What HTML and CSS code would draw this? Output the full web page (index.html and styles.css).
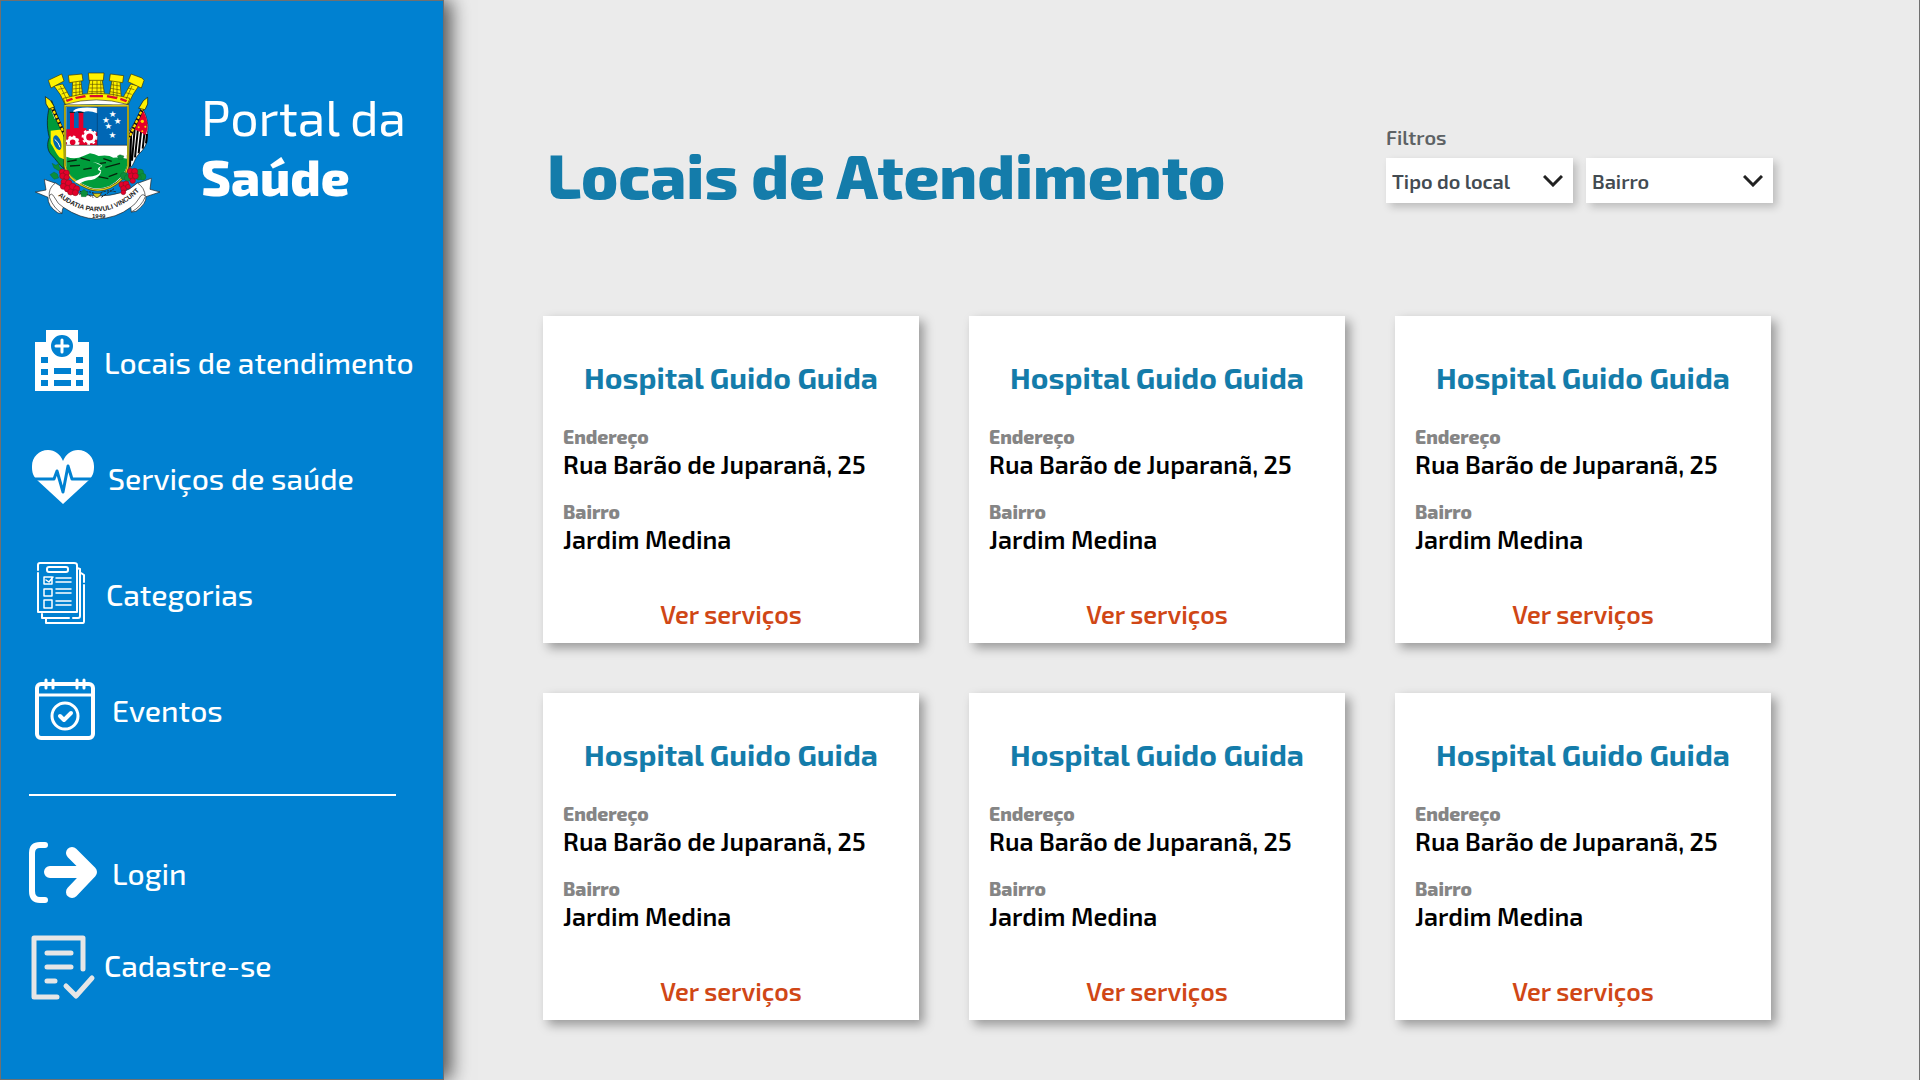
FILE: index.html
```html
<!DOCTYPE html>
<html lang="pt-BR">
<head>
<meta charset="utf-8">
<meta name="viewport" content="width=device-width, initial-scale=1">
<title>Portal da Saúde</title>
<link rel="stylesheet" href="styles.css">
</head>
<body>
<div class="page">
  <aside class="sidebar">
    <a class="brand" href="#">
      <svg class="brand-crest" viewBox="15 36 390 444" role="img" aria-label="Brasão do município">
        <!-- flags -->
        <path d="M65 122C48 160 50 205 58 232C50 252 52 270 62 282C80 300 88 316 102 326L102 220Z" fill="#009b3a" stroke="#111" stroke-width="2"/>
        <path d="M62 212L100 208L102 298L88 292C78 280 70 262 62 250Z" fill="#fff200"/>
        <ellipse cx="82" cy="248" rx="11" ry="23" fill="#0067b1" transform="rotate(-18 82 248)"/>
        <path d="M74 238Q86 246 90 262" fill="none" stroke="#fff" stroke-width="3"/>
        <path d="M62 140L76 176" stroke="#fff" stroke-width="4"/>
        <path d="M338 146C352 170 356 200 352 220C356 250 340 270 325 284C312 298 312 318 298 324L297 215Z" fill="#fff" stroke="#111" stroke-width="2"/>
        <path d="M304 210L300 320M314 207L306 302M324 206L315 292M334 208L326 280M344 214L338 266M351 222L348 250" stroke="#000" stroke-width="6"/>
        <path d="M336 148C352 170 358 200 347 226Q330 212 305 206Z" fill="#e4002b"/>
        <g fill="#ffd900"><circle cx="337" cy="184" r="5"/><circle cx="326" cy="202" r="3"/><circle cx="346" cy="200" r="3"/><circle cx="337" cy="214" r="3"/></g>
        <path d="M59 128L106 228M345 130L296 236" stroke="#111" stroke-width="10"/>
        <path d="M59 128L106 228M345 130L296 236" stroke="#ffd900" stroke-width="7" stroke-dasharray="9 5"/>
        <path d="M46 110L61 121L73 140L57 147L48 132ZM353 112L340 122L326 145L345 149L353 132Z" fill="#fff200" stroke="#111" stroke-width="2"/>
        <!-- mural crown -->
        <path d="M104 128Q198 96 294 128L286 138Q198 128 112 138Z" fill="#fff"/>
        <g fill="#fff200" stroke="#3d3500" stroke-width="2" stroke-linejoin="round">
          <path d="M72 78L98 72L122 115L104 131Q94 104 72 78Z"/>
          <path d="M128 60L152 58L158 106L126 115Z"/>
          <path d="M180 58L216 58L224 104L172 104Z"/>
          <path d="M246 60L270 64L274 116L238 106Z"/>
          <path d="M302 72L326 78Q306 104 296 131L276 118Z"/>
          <path d="M55 61L95 42L102 63L63 84Z"/><path d="M115 46L156 42L159 62L118 68Z"/>
          <path d="M175 39L222 39L220 61L177 61Z"/><path d="M241 42L281 47L278 68L238 62Z"/>
          <path d="M303 42L336 54L342 61L334 84L294 65Z"/>
          <path d="M100 115Q198 84 300 115L292 133Q198 106 106 133Z"/>
        </g>
        <path d="M85 88L104 84M95 102L112 96M91 78L111 120M129 76L155 73M129 87L156 84M129 98L157 95M138 66L138 108M149 64L149 105M180 73L218 73M178 84L220 84M176 95L222 95M188 62L186 103M201 62L201 103M212 62L213 103M244 74L270 78M242 85L271 90M240 95L272 101M250 66L250 108M261 68L261 111M294 84L313 89M287 98L305 103M306 78L288 118" fill="none" stroke="#5d5200" stroke-width="2"/>
        <path d="M107 120L126 113L129 119L111 126ZM135 111L165 105L168 112L138 117ZM179 105L219 105L219 112L179 112ZM232 105L263 111L260 118L230 112ZM272 113L292 121L288 127L270 120Z" fill="#d9112b"/>
        <!-- shield -->
        <path d="M105 137H294V318Q286 360 240 382Q198 400 160 378Q112 354 105 318Z" fill="#fff" stroke="#4d4700" stroke-width="7"/>
        <path d="M105 137H294V318Q286 360 240 382Q198 400 160 378Q112 354 105 318Z" fill="none" stroke="#d8ce1e" stroke-width="4"/>
        <path d="M109 141H291V256H109Z" fill="#0067b5"/>
        <path d="M130 152Q145 138 202 144V160Q175 150 160 157Q145 148 130 158Z" fill="#fff"/>
        <path d="M120 158H132V204H146V158H160V204H169V210L202 216V256H109V208H120Z" fill="#e4002b"/>
        <path d="M119 157H135M144 157H161" stroke="#111" stroke-width="3"/>
        <circle cx="128" cy="247" r="13" fill="none" stroke="#fff" stroke-width="9"/>
        <circle cx="128" cy="247" r="18" fill="none" stroke="#fff" stroke-width="5" stroke-dasharray="7 7"/>
        <path d="M109 256H202V268H109Z" fill="#fff"/>
        <circle cx="179" cy="231" r="15" fill="#e4002b" stroke="#fff" stroke-width="9"/>
        <circle cx="179" cy="231" r="21" fill="none" stroke="#fff" stroke-width="6" stroke-dasharray="8 8"/>
        <path d="M109 256H291" stroke="#111" stroke-width="2"/><path d="M202 141V256" stroke="#063e6c" stroke-width="2"/>
        <path d="M109 257H291V285Q250 280 205 284Q150 286 109 292Z" fill="#fff"/>
        <g fill="#fff" font-family="DejaVu Sans, sans-serif" font-size="26" text-anchor="middle"><text x="248" y="171">★</text><text x="228" y="188">★</text><text x="263" y="192">★</text><text x="235" y="208">★</text><text x="247" y="233">★</text></g>
        <path d="M109 290Q135 300 160 288L180 280Q194 282 206 288Q235 283 250 293Q272 292 291 296V318Q280 355 238 378Q198 394 163 374Q112 350 109 318Z" fill="#009c3b"/>
        <path d="M112 305L140 300M152 294L180 302M120 318L150 316M160 328L185 324M220 296L245 304M226 322L270 310M236 350L262 340M205 350L235 356M210 310L228 308" stroke="#06220c" stroke-width="4"/>
        <path d="M188 306Q210 313 214 318Q194 328 212 334Q204 350 174 350Q146 356 134 366L148 372Q164 360 184 360Q212 352 214 332Q202 326 217 318Q206 308 188 306Z" fill="#fff"/>
        <!-- motto ribbon -->
        <g fill="#fff" stroke="#222" stroke-width="2" stroke-linejoin="round">
          <path d="M43 358L80 371Q64 408 96 460L84 459Q52 438 54 412L16 396L48 390Z"/>
          <path d="M364 355L320 371Q340 408 304 456L318 454Q350 430 348 410L390 396L360 388Z"/>
          <path d="M76 369Q54 385 58 412Q72 446 96 460Q96 450 100 442Q150 476 200 477Q260 475 302 442L304 456Q334 440 346 410Q344 382 322 369Q282 408 202 408Q126 404 76 369Z"/>
        </g>
        <path d="M58 408Q64 396 72 410Q84 434 100 442M346 408Q336 398 328 414Q316 434 302 442" fill="none" stroke="#222" stroke-width="2"/>
        <path d="M148 404Q174 386 202 406Q222 386 260 396M150 394L190 412M214 412L252 386" fill="none" stroke="#222" stroke-width="3" stroke-dasharray="7 3"/>
        <path d="M188 400Q201 426 214 400Z" fill="#d8ce1e" stroke="#222" stroke-width="2"/>
        <path id="motto-line" d="M84 407Q140 456 206 454Q270 450 325 396" fill="none"/>
        <text class="crest-motto"><textPath href="#motto-line" startOffset="0">AUDATIA PARVULI VINCUNT</textPath></text>
        <text class="crest-year" x="206" y="474">1949</text>
        <!-- berries and leaves -->
        <g fill="#0b8f3c" stroke="#0b5d2a" stroke-width="1"><path d="M66 310l12 6 8-6 2 12 10 6-12 4-14-8zM60 344l12-8 10 6 4 12-14 4zM152 396l10-8 12 10-6 12-14 0zM262 288l8-4 12 4-4 10-12 0z"/><circle cx="282" cy="348" r="11"/><circle cx="293" cy="354" r="10"/><circle cx="330" cy="338" r="11"/><circle cx="338" cy="350" r="10"/><circle cx="326" cy="352" r="8"/></g>
        <g fill="#e4002b" stroke="#8f1020" stroke-width="2">
          <circle cx="97" cy="336" r="9"/><circle cx="109" cy="339" r="9"/><circle cx="98" cy="348" r="9"/><circle cx="110" cy="352" r="8"/>
          <circle cx="102" cy="366" r="9"/><circle cx="116" cy="370" r="10"/><circle cx="100" cy="379" r="9"/><circle cx="113" cy="386" r="10"/><circle cx="128" cy="380" r="10"/><circle cx="122" cy="396" r="9"/><circle cx="140" cy="386" r="9"/><circle cx="136" cy="398" r="9"/>
          <circle cx="301" cy="334" r="9"/><circle cx="314" cy="334" r="9"/><circle cx="304" cy="348" r="9"/><circle cx="316" cy="348" r="9"/><circle cx="308" cy="362" r="8"/><circle cx="276" cy="374" r="9"/><circle cx="288" cy="372" r="9"/><circle cx="281" cy="386" r="9"/><circle cx="280" cy="397" r="7"/><circle cx="294" cy="380" r="7"/>
        </g>
      </svg>
      <span class="brand-name">Portal da <strong>Saúde</strong></span>
    </a>

    <nav class="menu" aria-label="Principal">
      <a class="menu-link" href="#">
        <svg viewBox="0 0 80 64" width="80" height="64" aria-hidden="true">
          <path fill="#fff" fill-rule="evenodd" d="M22 0H54V12H65V61H11V12H22ZM38 5a11 11 0 1 0 0 22a11 11 0 1 0 0-22ZM17 27v6h7v-6ZM52 27v6h7v-6ZM17 39v6h7v-6ZM52 39v6h7v-6ZM30 38v6h17v-6ZM17 50v6h7v-6ZM52 50v6h7v-6ZM30 50v6h17v-6Z"/>
          <path d="M38 10v12M32 16h12" stroke="#fff" stroke-width="3" stroke-linecap="round"/>
        </svg>
        Locais de atendimento
      </a>
      <a class="menu-link" href="#">
        <svg viewBox="0 0 84 64" width="84" height="64" aria-hidden="true">
          <path fill="#fff" d="M39 58L13 34C8 29 8 24 8 20C8 11 15 4 24 4C31 4 36 8 39 15C42 8 47 4 54 4C63 4 70 11 70 20C70 24 70 29 65 34Z"/>
          <path d="M8 33H30L33 25L39 46L44 20L48 33H70" fill="none" stroke="#0081d1" stroke-width="3" stroke-linejoin="round"/>
        </svg>
        Serviços de saúde
      </a>
      <a class="menu-link" href="#">
        <svg viewBox="0 0 82 64" width="82" height="64" aria-hidden="true" fill="none" stroke="#fff" stroke-linecap="round" stroke-linejoin="round">
          <path stroke-width="2" d="M14 8V3Q14 1 16 1H50Q53 1 53 3V50H14V11M18 52V56H45M53 6L56 7V54Q56 56 54 56H49M22 57V61H59Q60 61 60 59V23M57 11L60 13V20"/>
          <rect x="23" y="5" width="21" height="5" rx="2" stroke-width="2"/>
          <path stroke-width="1.5" d="M20 15h8v7h-8zM22 18l3 2 4-5M20 27h8v7h-8zM20 38h8v8h-8zM32 16h15M32 20h15M32 27h15M32 31h15M32 39h15M32 43h15"/>
        </svg>
        Categorias
      </a>
      <a class="menu-link" href="#">
        <svg viewBox="0 0 88 64" width="88" height="64" aria-hidden="true" fill="none" stroke="#fff" stroke-linecap="round" stroke-linejoin="round">
          <rect x="13" y="6" width="56" height="54" rx="4" stroke-width="4"/>
          <path stroke-width="3" d="M13 17H69M22 2V10M29 2V10M53 2V10M60 2V10"/>
          <circle cx="41" cy="38" r="13" stroke-width="3"/>
          <path stroke-width="4" d="M36 38L40 42L47 35"/>
        </svg>
        Eventos
      </a>
    </nav>

    <hr class="divider">

    <nav class="menu menu--account" aria-label="Conta">
      <a class="menu-link" href="#">
        <svg viewBox="0 0 88 64" width="88" height="64" aria-hidden="true" fill="none" stroke="#fff" stroke-linecap="round">
          <path stroke-width="6" d="M21 4H16Q8 4 8 12V50Q8 59 16 59H21"/>
          <path stroke-width="12" stroke-linejoin="round" d="M26 31H66M48 12L67 31L48 51"/>
        </svg>
        Login
      </a>
      <a class="menu-link" href="#">
        <svg viewBox="0 -3 80 70" width="80" height="70" aria-hidden="true" fill="none" stroke="#e6e6e6" stroke-width="5" stroke-linecap="round" stroke-linejoin="round">
          <path d="M59 36V5H10V64H33M23 20H47M23 34H47M23 48H31M42 53L52 63L68 45"/>
        </svg>
        Cadastre-se
      </a>
    </nav>
  </aside>

  <main class="content">
    <header class="content-header">
      <h1 class="content-title">Locais de Atendimento</h1>
      <fieldset class="filters">
        <legend class="filters-label">Filtros</legend>
        <div class="filters-row">
          <div class="select">
            <select aria-label="Tipo do local"><option>Tipo do local</option></select>
            <svg viewBox="0 0 20 12" width="20" height="12" aria-hidden="true"><path d="M1 1L10 10L19 1" fill="none" stroke="#222" stroke-width="3"/></svg>
          </div>
          <div class="select">
            <select aria-label="Bairro"><option>Bairro</option></select>
            <svg viewBox="0 0 20 12" width="20" height="12" aria-hidden="true"><path d="M1 1L10 10L19 1" fill="none" stroke="#222" stroke-width="3"/></svg>
          </div>
        </div>
      </fieldset>
    </header>

    <section class="cards" aria-label="Locais">
      <article class="card">
        <h2 class="card-title">Hospital Guido Guida</h2>
        <dl class="card-data"><div><dt>Endereço</dt><dd>Rua Barão de Juparanã, 25</dd></div><div><dt>Bairro</dt><dd>Jardim Medina</dd></div></dl>
        <a class="card-link" href="#">Ver serviços</a>
      </article>
      <article class="card">
        <h2 class="card-title">Hospital Guido Guida</h2>
        <dl class="card-data"><div><dt>Endereço</dt><dd>Rua Barão de Juparanã, 25</dd></div><div><dt>Bairro</dt><dd>Jardim Medina</dd></div></dl>
        <a class="card-link" href="#">Ver serviços</a>
      </article>
      <article class="card">
        <h2 class="card-title">Hospital Guido Guida</h2>
        <dl class="card-data"><div><dt>Endereço</dt><dd>Rua Barão de Juparanã, 25</dd></div><div><dt>Bairro</dt><dd>Jardim Medina</dd></div></dl>
        <a class="card-link" href="#">Ver serviços</a>
      </article>
      <article class="card">
        <h2 class="card-title">Hospital Guido Guida</h2>
        <dl class="card-data"><div><dt>Endereço</dt><dd>Rua Barão de Juparanã, 25</dd></div><div><dt>Bairro</dt><dd>Jardim Medina</dd></div></dl>
        <a class="card-link" href="#">Ver serviços</a>
      </article>
      <article class="card">
        <h2 class="card-title">Hospital Guido Guida</h2>
        <dl class="card-data"><div><dt>Endereço</dt><dd>Rua Barão de Juparanã, 25</dd></div><div><dt>Bairro</dt><dd>Jardim Medina</dd></div></dl>
        <a class="card-link" href="#">Ver serviços</a>
      </article>
      <article class="card">
        <h2 class="card-title">Hospital Guido Guida</h2>
        <dl class="card-data"><div><dt>Endereço</dt><dd>Rua Barão de Juparanã, 25</dd></div><div><dt>Bairro</dt><dd>Jardim Medina</dd></div></dl>
        <a class="card-link" href="#">Ver serviços</a>
      </article>
    </section>
  </main>
</div>
</body>
</html>
```
FILE: styles.css
```css
* {
  box-sizing: border-box;
}

body {
  margin: 0;
  background: #ebebeb;
  color: #000;
  font-family: "Exo 2", Roboto, sans-serif;
}

h1, h2, dl, dd {
  margin: 0;
}

a {
  text-decoration: none;
}

.page {
  display: flex;
  min-height: 100vh;
  border-right: 1px solid #707070;
}

/* Sidebar */
.sidebar {
  flex: none;
  width: 444px;
  padding-top: 71px;
  border: 1px solid #707070;
  background: #0081d1;
  color: #fff;
  box-shadow: 7px 0 18px rgba(0, 0, 0, 0.65);
}

.brand {
  display: flex;
  align-items: center;
  gap: 36px;
  padding-left: 34px;
  color: #fff;
}

.brand-crest {
  flex: none;
  width: 130px;
  height: 148px;
}

.brand-name {
  font-size: 50px;
  line-height: 60px;
}

.brand-name strong {
  display: block;
  font-weight: 800;
}

.crest-motto,
.crest-year {
  font-family: "Liberation Sans", sans-serif;
  font-size: 20px;
  font-weight: bold;
  fill: #222;
}

.crest-year {
  font-size: 18px;
  text-anchor: middle;
}

.menu {
  display: flex;
  flex-direction: column;
  gap: 52px;
  margin-top: 110px;
  padding-left: 23px;
}

.menu-link {
  display: flex;
  align-items: center;
  color: #fff;
  font-size: 30px;
  font-weight: 500;
  line-height: 36px;
}

.menu-link svg {
  flex: none;
}

.divider {
  height: 2px;
  margin: 52px 47px 0 28px;
  border: 0;
  background: #fff;
}

.menu--account {
  gap: 25px;
  margin-top: 45px;
}

/* Main area */
.content {
  flex: 1;
  min-width: 0;
  padding: 126px 146px 60px 99px;
}

.content-header {
  display: flex;
  align-items: flex-end;
  justify-content: space-between;
  padding-left: 4px;
}

.content-title {
  color: #147caa;
  font-size: 62px;
  font-weight: 800;
  line-height: 58px;
}

.filters {
  margin: 0;
  padding: 0;
  border: 0;
}

.filters-label {
  padding: 0;
  margin-bottom: 10px;
  color: #5d6265;
  font-size: 20px;
  font-weight: 600;
  line-height: 22px;
}

.filters-row {
  display: flex;
  gap: 13px;
}

.select {
  display: grid;
  align-items: center;
  width: 187px;
}

.select select {
  grid-area: 1 / 1;
  height: 45px;
  padding: 0 36px 0 6px;
  border: 0;
  border-radius: 0;
  background: #fff;
  box-shadow: 4px 4px 8px rgba(0, 0, 0, 0.2);
  color: #434b52;
  font: 600 20px "Exo 2", Roboto, sans-serif;
  appearance: none;
}

.select svg {
  grid-area: 1 / 1;
  justify-self: end;
  margin-right: 10px;
  pointer-events: none;
}

.cards {
  display: grid;
  grid-template-columns: repeat(3, 1fr);
  gap: 50px;
  margin: 113px 2px 0 0;
}

.card {
  display: flex;
  flex-direction: column;
  padding: 43px 20px 14px;
  background: #fff;
  box-shadow: 5px 5px 10px rgba(0, 0, 0, 0.35);
}

.card-title {
  color: #147caa;
  font-size: 30px;
  font-weight: 700;
  line-height: 36px;
  text-align: center;
}

.card-data {
  display: flex;
  flex-direction: column;
  gap: 21px;
  margin: 30px 0 45px;
}

.card-data dt {
  color: #858585;
  font-size: 19px;
  font-weight: 800;
  line-height: 24px;
}

.card-data dd {
  font-size: 25px;
  font-weight: 600;
  line-height: 30px;
}

.card-link {
  align-self: center;
  color: #d04716;
  font-size: 25px;
  font-weight: 600;
  line-height: 30px;
}
```
